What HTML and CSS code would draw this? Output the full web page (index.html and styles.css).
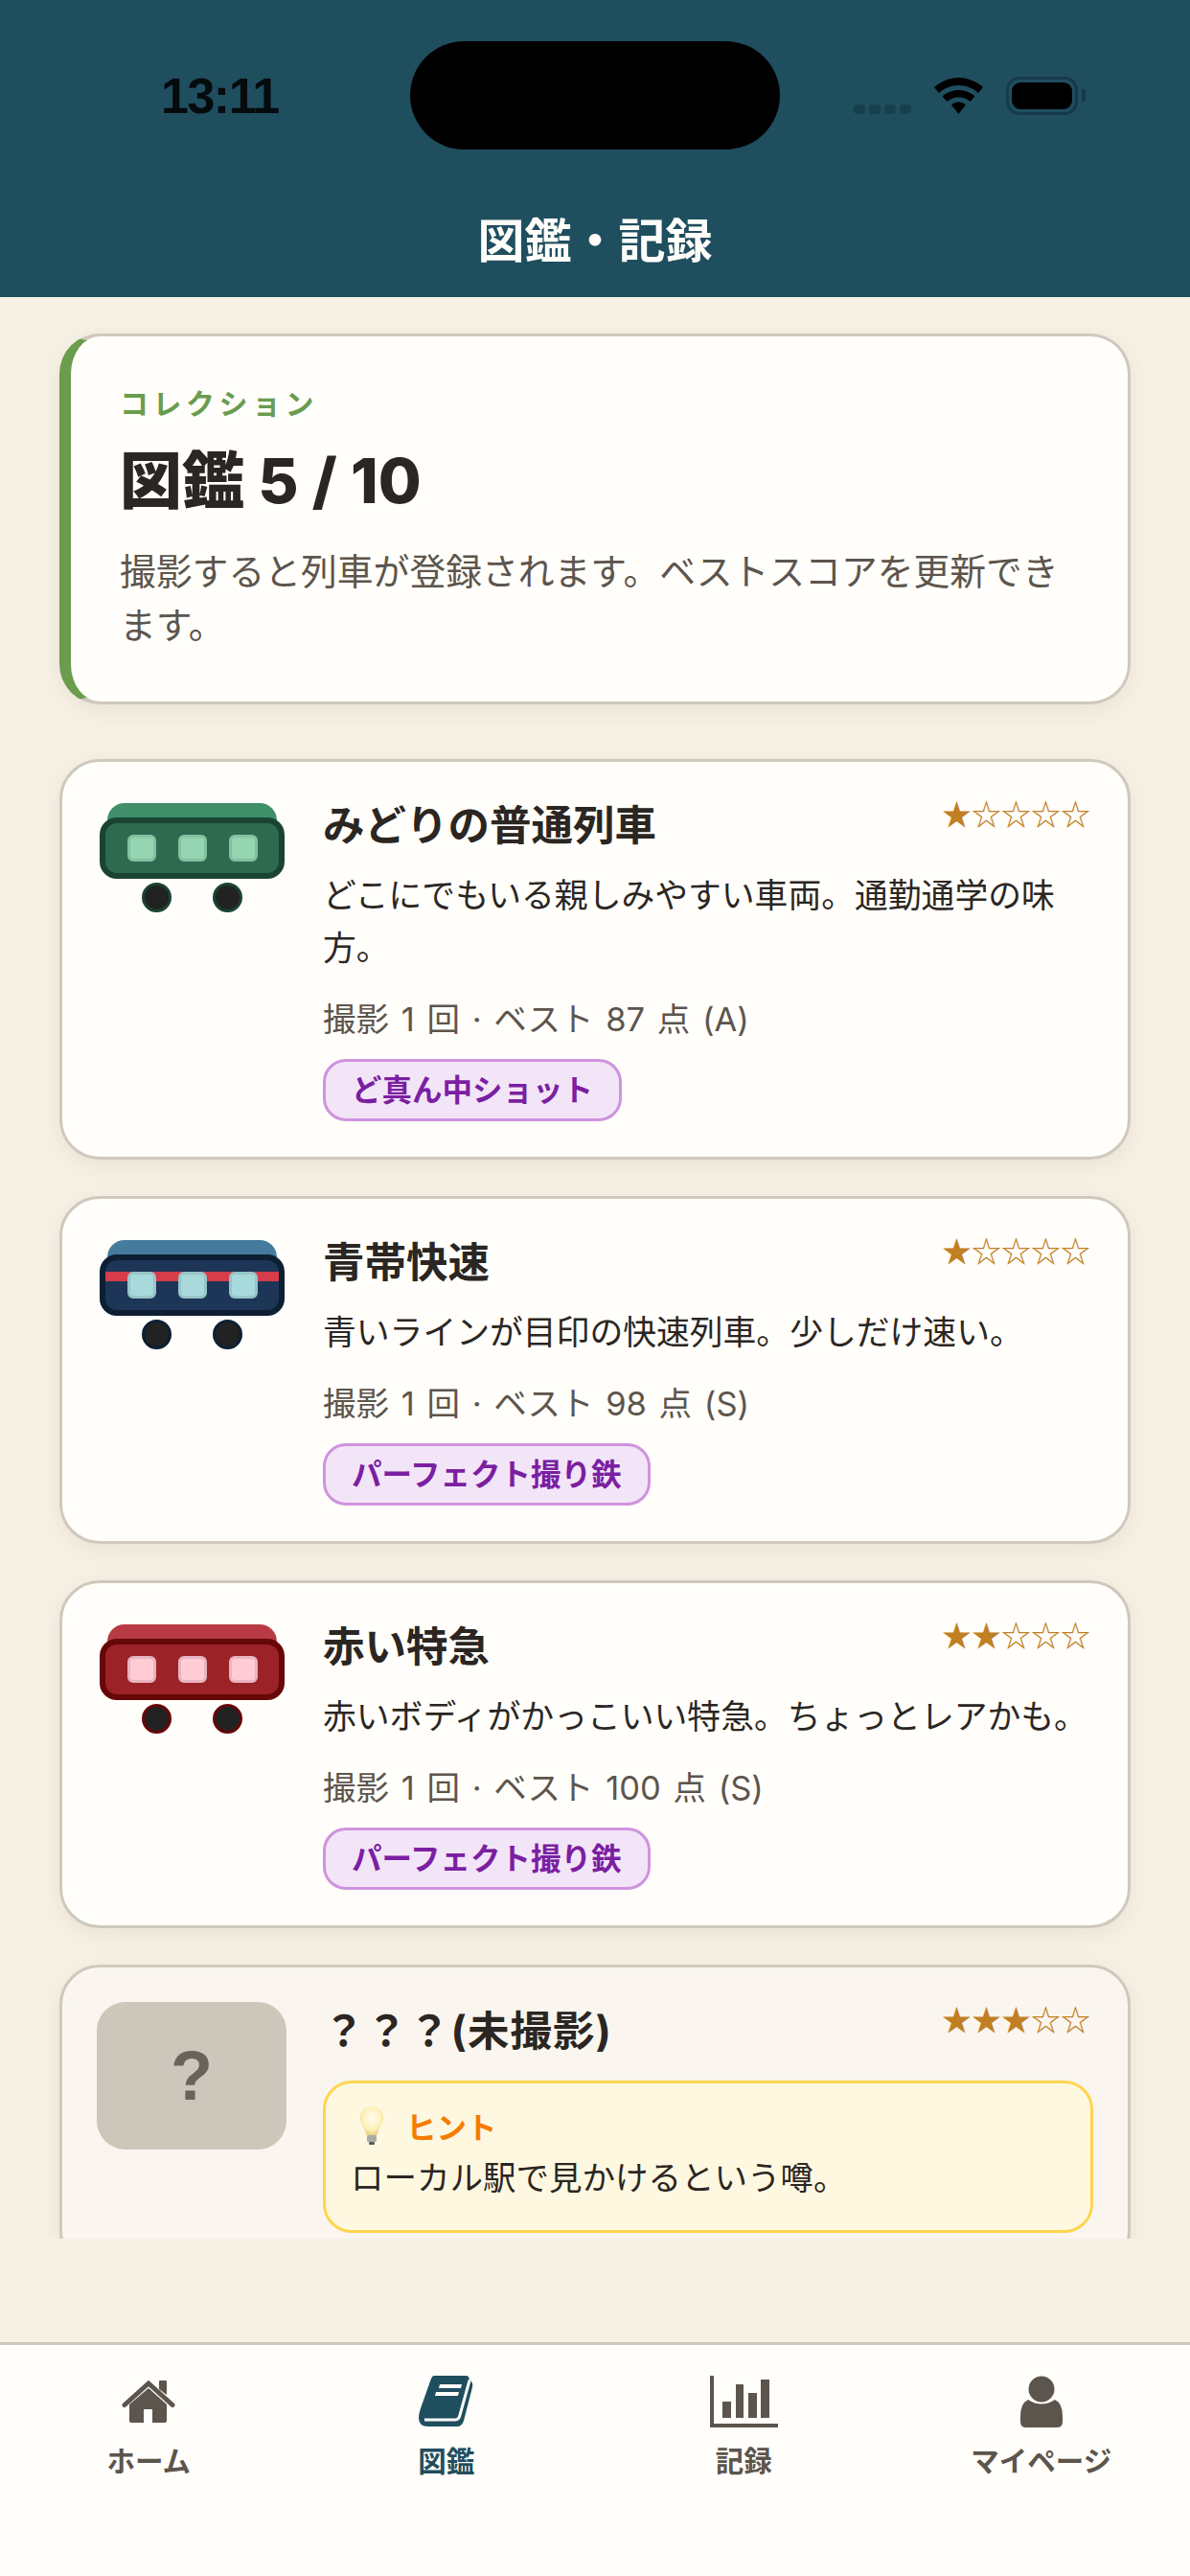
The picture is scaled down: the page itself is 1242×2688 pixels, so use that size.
FILE: index.html
```html
<!DOCTYPE html>
<html lang="ja">
<head>
    <meta charset="UTF-8">
    <meta name="viewport" content="width=device-width, initial-scale=1.0">
    <title>図鑑・記録</title>
    <link rel="stylesheet" href="styles.css">
</head>
<body>
    <div class="screen">
        <header class="app-header">
            <div class="status-bar">
                <span class="status-time">13:11</span>
                <div class="island"></div>
                <div class="status-icons">
                    <div class="signal"><i></i><i></i><i></i><i></i></div>
                    <svg class="wifi" viewBox="0 0 51 38">
                        <path d="M25.5 0C16 0 7 4 0 10l5 6c5.5-5 12.5-8 20.5-8s15 3 20.5 8l5-6C44 4 35 0 25.5 0z"/>
                        <path d="M25.5 13c-6.5 0-12.5 2.5-17 6.5l5 5.5c3-2.5 7-4.5 12-4.5s9 2 12 4.5l5-5.5c-4.5-4-10.5-6.5-17-6.5z"/>
                        <path d="M25.5 38L18 28.5c2-1.8 4.7-3 7.5-3s5.5 1.2 7.5 3z"/>
                    </svg>
                    <div class="battery"><div class="battery-fill"></div></div>
                    <div class="battery-nub"></div>
                </div>
            </div>
            <h1 class="page-title">図鑑・記録</h1>
        </header>

        <main class="content">
            <section class="hero-card">
                <div class="hero-label">コレクション</div>
                <div class="hero-title">図鑑 5 / 10</div>
                <p class="hero-text">撮影すると列車が登録されます。ベストスコアを更新できます。</p>
            </section>

            <div class="train-list">
                <article class="train-card">
                    <div class="train-thumb">
                        <div class="train train-green">
                            <div class="train-roof"></div>
                            <div class="train-body"><i></i><i></i><i></i></div>
                            <div class="train-wheels"><i></i><i></i></div>
                        </div>
                    </div>
                    <div class="train-info">
                        <div class="train-head">
                            <h2 class="train-name">みどりの普通列車</h2>
                            <div class="stars">★☆☆☆☆</div>
                        </div>
                        <p class="train-desc">どこにでもいる親しみやすい車両。通勤通学の味方。</p>
                        <p class="train-stats">撮影 1 回 · ベスト 87 点 (A)</p>
                        <span class="badge">ど真ん中ショット</span>
                    </div>
                </article>

                <article class="train-card">
                    <div class="train-thumb">
                        <div class="train train-blue">
                            <div class="train-roof"></div>
                            <div class="train-body"><i></i><i></i><i></i></div>
                            <div class="train-wheels"><i></i><i></i></div>
                        </div>
                    </div>
                    <div class="train-info">
                        <div class="train-head">
                            <h2 class="train-name">青帯快速</h2>
                            <div class="stars">★☆☆☆☆</div>
                        </div>
                        <p class="train-desc">青いラインが目印の快速列車。少しだけ速い。</p>
                        <p class="train-stats">撮影 1 回 · ベスト 98 点 (S)</p>
                        <span class="badge">パーフェクト撮り鉄</span>
                    </div>
                </article>

                <article class="train-card">
                    <div class="train-thumb">
                        <div class="train train-red">
                            <div class="train-roof"></div>
                            <div class="train-body"><i></i><i></i><i></i></div>
                            <div class="train-wheels"><i></i><i></i></div>
                        </div>
                    </div>
                    <div class="train-info">
                        <div class="train-head">
                            <h2 class="train-name">赤い特急</h2>
                            <div class="stars">★★☆☆☆</div>
                        </div>
                        <p class="train-desc">赤いボディがかっこいい特急。ちょっとレアかも。</p>
                        <p class="train-stats">撮影 1 回 · ベスト 100 点 (S)</p>
                        <span class="badge">パーフェクト撮り鉄</span>
                    </div>
                </article>

                <article class="train-card locked">
                    <div class="train-thumb">
                        <div class="unknown-thumb">?</div>
                    </div>
                    <div class="train-info">
                        <div class="train-head">
                            <h2 class="train-name">？？？(未撮影)</h2>
                            <div class="stars">★★★☆☆</div>
                        </div>
                        <div class="hint-box">
                            <div class="hint-head">
                                <svg class="bulb" viewBox="0 0 26 40">
                                    <defs>
                                        <radialGradient id="bulbGlow" cx="50%" cy="40%" r="60%">
                                            <stop offset="0" stop-color="#fffdf0"/>
                                            <stop offset="0.7" stop-color="#fdf0b8"/>
                                            <stop offset="1" stop-color="#e9cf7a"/>
                                        </radialGradient>
                                    </defs>
                                    <path d="M13 0C5.5 0 1 5.5 1 12c0 6.5 5 10.5 6.5 18h11C20 22.5 25 18.5 25 12 25 5.5 20.5 0 13 0z" fill="url(#bulbGlow)"/>
                                    <rect x="8" y="30" width="10" height="7" rx="1.5" fill="#a9a9a6"/>
                                    <rect x="10" y="37" width="6" height="3" rx="1" fill="#5d5d5b"/>
                                </svg>
                                <span class="hint-label">ヒント</span>
                            </div>
                            <p class="hint-text">ローカル駅で見かけるという噂。</p>
                        </div>
                    </div>
                </article>
            </div>
        </main>

        <nav class="tab-bar">
            <a class="tab">
                <span class="tab-icon">
                    <svg width="56" height="46" viewBox="0 0 56 46">
                        <path d="M28 9l19 17v17a2 2 0 0 1-2 2H32V31h-9v14H10a2 2 0 0 1-2-2V26z"/>
                        <path d="M39 10V2a1 1 0 0 1 1-1h6a1 1 0 0 1 1 1v14z"/>
                        <path class="icon-line" d="M3 26.5L28 4l25 22.5"/>
                    </svg>
                </span>
                <span class="tab-label">ホーム</span>
            </a>
            <a class="tab active">
                <span class="tab-icon">
                    <svg width="57" height="54" viewBox="0 0 57 54">
                        <path d="M16 0h33q4 0 3.5 4L52 7l2-2q3 3 2 7l-9 35q-2 6-7 6H10Q0 53 0 44q0-4 2-10L13 3q1-3 3-3z"/>
                        <path class="icon-gap" d="M53 5L43 41q-1 5-5 5H6"/>
                        <path class="icon-cut" d="M22 9h23l-1 4H21zM18 17h24l-1 4H17z"/>
                    </svg>
                </span>
                <span class="tab-label">図鑑</span>
            </a>
            <a class="tab">
                <span class="tab-icon">
                    <svg width="71" height="54" viewBox="0 0 71 54">
                        <path d="M0 0h4v50h67v4H0z"/>
                        <path d="M13 27h9v17h-9zM27 9h8v35h-8zM40 18h9v26h-9zM53 4h9v40h-9z"/>
                    </svg>
                </span>
                <span class="tab-label">記録</span>
            </a>
            <a class="tab">
                <span class="tab-icon">
                    <svg width="44" height="54" viewBox="0 0 44 54">
                        <circle cx="22" cy="14" r="13.5"/>
                        <path d="M8 25q14 9 28 0 8 4 8 17v6q0 6-6 6H6q-6 0-6-6v-6q0-13 8-17z"/>
                    </svg>
                </span>
                <span class="tab-label">マイページ</span>
            </a>
        </nav>
    </div>
</body>
</html>
```

FILE: styles.css
```css
* {
    margin: 0;
    padding: 0;
    box-sizing: border-box;
}

body {
    background: #f7f1e5;
    color: #2b2622;
    font-family: Inter, "Noto Sans CJK JP", sans-serif;
}

.screen {
    height: 2688px;
    display: flex;
    flex-direction: column;
    overflow: hidden;
}

/* ヘッダー */
.app-header {
    height: 310px;
    flex-shrink: 0;
    background: #1f4e5f;
    padding-top: 43px;
}

.status-bar {
    height: 113px;
    display: flex;
    align-items: center;
    padding-left: 168px;
}

.status-time {
    width: 117px;
    font-family: "Liberation Sans", sans-serif;
    font-size: 52px;
    font-weight: 700;
    letter-spacing: -1.5px;
    color: #050a0c;
    white-space: nowrap;
}

.island {
    width: 386px;
    height: 113px;
    margin-left: 143px;
    border-radius: 57px;
    background: #000;
}

.status-icons {
    display: flex;
    align-items: center;
    height: 40px;
    margin-left: 77px;
}

.signal {
    display: flex;
    gap: 4px;
    align-self: flex-end;
    height: 10px;
    margin-bottom: 1px;
}

.signal i {
    width: 12px;
    border-radius: 4px;
    background: #17404f;
}

.wifi {
    width: 51px;
    height: 38px;
    margin-left: 24px;
    fill: #000;
}

.battery {
    width: 75px;
    height: 40px;
    margin-left: 24px;
    padding: 3px;
    border: 3px solid #163a4a;
    border-radius: 14px;
}

.battery-fill {
    height: 100%;
    border-radius: 9px;
    background: #000;
}

.battery-nub {
    width: 4px;
    height: 13px;
    margin-left: 4px;
    border-radius: 0 3px 3px 0;
    background: #163a4a;
}

.page-title {
    margin-top: 66px;
    font-size: 49px;
    font-weight: 700;
    line-height: 60px;
    text-align: center;
    color: #fffefa;
}

/* メイン */
.content {
    flex: 1;
    min-height: 0;
    margin-bottom: 108px;
    padding: 38px 62px 0;
    overflow: hidden;
}

.hero-card {
    height: 387px;
    padding: 48px 51px 0;
    background: #fffefa;
    border: 3px solid #cfc9bd;
    border-left: 12px solid #6a9c4e;
    border-radius: 42px;
    box-shadow: 0 6px 24px rgba(60, 50, 30, 0.08);
}

.hero-label {
    font-size: 30px;
    font-weight: 600;
    line-height: 44px;
    letter-spacing: 4.5px;
    color: #6a9c4e;
}

.hero-title {
    margin-top: 14px;
    font-size: 65px;
    font-weight: 800;
    line-height: 90px;
}

.hero-text {
    margin-top: 21px;
    font-size: 37.8px;
    line-height: 56px;
    color: #5c554d;
}

.train-list {
    display: flex;
    flex-direction: column;
    gap: 38px;
    margin-top: 57px;
}

.train-card {
    display: flex;
    gap: 38px;
    padding: 36px 36px 37px;
    background: #fffefa;
    border: 3px solid #cfc9bd;
    border-radius: 42px;
    box-shadow: 0 6px 24px rgba(60, 50, 30, 0.08);
}

.train-card.locked {
    background: #faf6ef;
}

.train-thumb {
    width: 198px;
    flex-shrink: 0;
}

/* 列車イラスト */
.train {
    width: 193px;
    margin: 7px 0 0 3px;
}

.train-green {
    --roof: #3f8f6b;
    --body: #2d6a4f;
    --edge: #1b4332;
    --glass: #95d5b2;
    --glass-edge: #82c2a0;
}

.train-blue {
    --roof: #457b9d;
    --body: #1d3557;
    --edge: #0d1f33;
    --glass: #a8dadc;
    --glass-edge: #97c5c8;
    --stripe: #d63c4a;
}

.train-red {
    --roof: #b83b44;
    --body: #9b2226;
    --edge: #660708;
    --glass: #ffccd5;
    --glass-edge: #e8b4bf;
}

.train-roof {
    height: 27px;
    margin: 0 8px -12px;
    border-radius: 18px 18px 0 0;
    background: var(--roof);
}

.train-body {
    position: relative;
    display: flex;
    justify-content: center;
    align-items: center;
    gap: 23px;
    height: 64px;
    border: 6px solid var(--edge);
    border-radius: 18px;
    background: var(--body);
}

.train-blue .train-body {
    background: linear-gradient(var(--stripe), var(--stripe)) no-repeat 0 12px / 100% 10px, var(--body);
}

.train-body i {
    width: 30px;
    height: 28px;
    border: 3px solid var(--glass-edge);
    border-radius: 6px;
    background: var(--glass);
}

.train-wheels {
    display: flex;
    justify-content: center;
    gap: 43px;
    margin-top: 4px;
}

.train-wheels i {
    width: 31px;
    height: 31px;
    border: 3px solid var(--edge);
    border-radius: 50%;
    background: #222;
}

.unknown-thumb {
    display: flex;
    justify-content: center;
    align-items: center;
    height: 154px;
    border-radius: 30px;
    background: #cdc7bb;
    font-family: "Liberation Sans", sans-serif;
    font-size: 72px;
    font-weight: 700;
    color: #6b6259;
}

.train-info {
    flex: 1;
    min-width: 0;
}

.train-head {
    display: flex;
    justify-content: space-between;
    align-items: flex-start;
}

.train-name {
    font-size: 43.5px;
    font-weight: 700;
    line-height: 60px;
}

.locked .train-name {
    letter-spacing: 1px;
}

.stars {
    margin-right: 3px;
    font-family: "Noto Sans CJK JP", sans-serif;
    font-size: 31px;
    line-height: 34px;
    color: #c17f24;
    white-space: nowrap;
}

.train-desc {
    margin-top: 16px;
    font-size: 34.8px;
    line-height: 55px;
}

.train-stats {
    margin-top: 22px;
    font-size: 34.5px;
    line-height: 50px;
    word-spacing: 3px;
    color: #5c554d;
}

.badge {
    display: inline-block;
    margin-top: 16px;
    padding: 0 27px;
    background: #f3e5f8;
    border: 3px solid #cf93de;
    border-radius: 24px;
    font-size: 31.5px;
    font-weight: 700;
    line-height: 59px;
    color: #7b1fa2;
}

.hint-box {
    margin-top: 22px;
    padding: 22px 26px 28px;
    background: #fff8e1;
    border: 3px solid #ffd54f;
    border-radius: 30px;
}

.hint-head {
    display: flex;
    align-items: center;
    gap: 23px;
    height: 44px;
    padding-left: 9px;
}

.bulb {
    width: 26px;
    height: 40px;
}

.hint-label {
    font-size: 31.5px;
    font-weight: 600;
    color: #f57c00;
}

.hint-text {
    margin-top: 7px;
    font-size: 34.5px;
    line-height: 52px;
}

/* タブバー */
.tab-bar {
    height: 244px;
    flex-shrink: 0;
    display: grid;
    grid-template-columns: repeat(4, 1fr);
    padding-top: 32px;
    background: #fffefa;
    border-top: 3px solid #cfc9bd;
}

.tab {
    display: flex;
    flex-direction: column;
    align-items: center;
    color: #5c554d;
}

.tab.active {
    color: #1f4e5f;
}

.tab-icon {
    display: flex;
    align-items: center;
    height: 54px;
}

.tab-icon svg {
    fill: currentColor;
}

.tab-icon .icon-line {
    fill: none;
    stroke: currentColor;
    stroke-width: 5;
    stroke-linecap: round;
}

.tab-icon .icon-gap {
    fill: none;
    stroke: #fffefa;
    stroke-width: 3;
}

.tab-icon .icon-cut {
    fill: #fffefa;
}

.tab-label {
    margin-top: 14px;
    font-size: 29.5px;
    font-weight: 600;
    line-height: 42px;
}
```
